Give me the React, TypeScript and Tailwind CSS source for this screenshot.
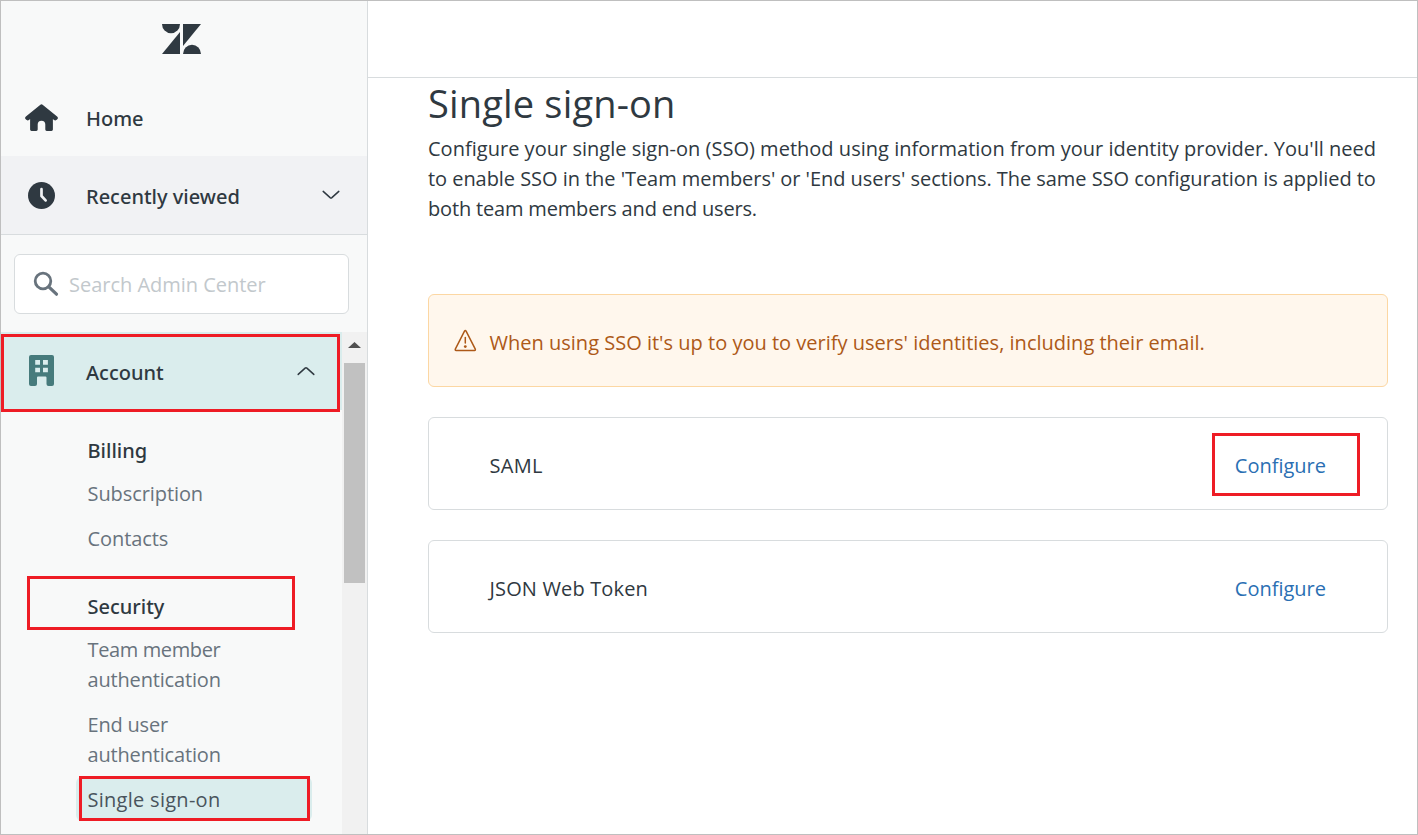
import React from "react";

const heading = "font-['Noto_Sans',sans-serif] font-medium text-[#2f3941]";

function Logo() {
  return (
    <svg width="39" height="30" viewBox="0 0 39 30" fill="#2f3941">
      <path d="M0 0H18A9 9.2 0 0 1 0 0Z" />
      <path d="M18 8V30H0Z" />
      <path d="M21 0H39L21 22Z" />
      <path d="M21 30A9 9.2 0 0 1 39 30Z" />
    </svg>
  );
}

function HomeIcon() {
  return (
    <svg width="34" height="28" viewBox="0 0 34 28" fill="#2f3941">
      <path d="M15.1 .9Q16.5 -.4 17.9 .9L32.1 12.6Q33.5 13.8 32.5 15L31.4 16Q30.2 16.8 29 15.9L27.9 15.1V25.6Q27.9 27 26.5 27H21.7Q20.3 27 20.3 25.6V20.6A3.8 3.8 0 0 0 12.7 20.6V25.6Q12.7 27 11.3 27H6.5Q5.1 27 5.1 25.6V15.1L4 15.9Q2.8 16.8 1.6 16L.5 15Q-.5 13.8 .9 12.6Z" />
    </svg>
  );
}

function ClockIcon() {
  return (
    <svg width="27" height="27" viewBox="0 0 27 27" fill="none">
      <circle cx="13.5" cy="13.5" r="13.5" fill="#2f3941" />
      <path d="M13.5 7.2V14L17.6 18.4" stroke="#f1f3f5" strokeWidth="2.7" strokeLinecap="round" strokeLinejoin="round" />
    </svg>
  );
}

function SearchIcon() {
  return (
    <svg width="26" height="26" viewBox="0 0 26 26" fill="none" stroke="#68737d">
      <circle cx="10" cy="10" r="7.8" strokeWidth="2.8" />
      <path d="M15.8 15.8L23.5 23.2" strokeWidth="3.2" strokeLinecap="round" />
    </svg>
  );
}

function BuildingIcon() {
  return (
    <svg width="25" height="31" viewBox="0 0 25 31" fill="#467b7c">
      <path
        fillRule="evenodd"
        d="M2 0H23Q25 0 25 2V29Q25 31 23 31H19.5Q17.5 31 17.5 29V22.5Q17.5 21.4 16.4 21.4H9Q8 21.4 8 22.5V29Q8 31 6 31H2Q0 31 0 29V2Q0 0 2 0ZM6.2 5V9.8H11V5ZM14 5V9.8H18.9V5ZM6.2 12.7V17.2H11V12.7ZM14 12.7V17.2H18.9V12.7Z"
      />
    </svg>
  );
}

function Chevron({ up = false }: { up?: boolean }) {
  return (
    <svg width="18" height="10" viewBox="0 0 18 10" fill="none" stroke="#2f3941" strokeWidth="1.5" strokeLinecap="round">
      <path d={up ? "M1.2 8.4L8.1 2.2Q9 1.5 9.9 2.2L16.8 8.4" : "M1.2 1.4L8.1 7.6Q9 8.3 9.9 7.6L16.8 1.4"} />
    </svg>
  );
}

function WarningIcon() {
  return (
    <svg width="24" height="24" viewBox="0 0 24 24" fill="none" stroke="#ad5918" strokeWidth="1.5" strokeLinecap="round" strokeLinejoin="round">
      <path d="M11.5 2.1Q12.3 .8 13.1 2.1L22.3 20.2Q22.7 21.4 21.5 21.5H3.1Q1.9 21.4 2.3 20.2Z" />
      <path d="M12.3 8.5V14" />
      <circle cx="12.3" cy="17.6" r="1.4" fill="#ad5918" stroke="none" />
    </svg>
  );
}

function Mark({ className }: { className: string }) {
  return <div className={`pointer-events-none absolute border-3 border-[#ee1c25] ${className}`} />;
}

function MethodCard({ name, spacing, marked = false }: { name: string; spacing: string; marked?: boolean }) {
  return (
    <div className="relative flex h-[93px] items-center justify-between rounded-md border border-[#d8dcde] pt-[4px] pr-[61px] pl-[60.5px] text-[#2f3941]">
      <span className={spacing}>{name}</span>
      <a className="text-[#2a6fb3]">Configure</a>
      {marked && <Mark className="top-[15px] right-[27px] h-[63px] w-[148px]" />}
    </div>
  );
}

export default function App() {
  return (
    <div className="flex h-[835px] w-[1418px] overflow-hidden border border-[#bfbfbf] bg-white font-['Open_Sans',sans-serif] text-[20px] leading-[30px]">
      <aside className="flex w-[367px] shrink-0 flex-col border-r border-[#d8dcde] bg-[#f8f9f9]">
        <div className="flex h-[77px] justify-center pt-[23px] pr-[5px]">
          <Logo />
        </div>
        <div className="flex h-[78px] items-center pt-[2px] pl-[24px]">
          <div className="flex w-[61px]">
            <HomeIcon />
          </div>
          <span className={`pt-px ${heading}`}>Home</span>
        </div>
        <div className="flex h-[79px] items-center border-b border-[#d8dcde] bg-[#f1f2f4] pr-[27px] pl-[27px]">
          <div className="flex w-[58px]">
            <ClockIcon />
          </div>
          <span className={`flex-1 pt-[3px] ${heading}`}>Recently viewed</span>
          <Chevron />
        </div>
        <div className="h-[97px] pt-[19px] pl-[13px]">
          <div className="flex h-[60px] w-[335px] items-center rounded-md border border-[#d8dcde] bg-white pl-[18px]">
            <SearchIcon />
            <span className="ml-[10px] pt-[2px] tracking-[-0.02px] text-[#c2c8cc]">Search Admin Center</span>
          </div>
        </div>
        <div className="flex min-h-0 flex-1">
          <nav className="w-[341px]">
            <div className="relative flex h-[78px] items-center bg-[#daeded] pr-[27px] pl-[28px]">
              <div className="flex w-[57px] pb-[2px]">
                <BuildingIcon />
              </div>
              <span className={`flex-1 pt-[3px] ${heading}`}>Account</span>
              <Chevron up />
              <Mark className="top-[2px] left-0 h-[78px] w-[339px]" />
            </div>
            <div className="flex flex-col pt-[26px] pl-[86.5px] text-[#68737d]">
              <span className={heading}>Billing</span>
              <span className="mt-[13px] tracking-[-0.08px]">Subscription</span>
              <span className="mt-[15px] tracking-[-0.08px]">Contacts</span>
              <div className="relative mt-[38px]">
                <span className={heading}>Security</span>
                <Mark className="-top-[16px] -left-[60.5px] h-[54px] w-[268px]" />
              </div>
              <div className="mt-[13px]">
                <div className="tracking-[-0.38px]">Team member</div>
                <div className="tracking-[-0.17px]">authentication</div>
              </div>
              <div className="mt-[15px]">
                <div className="tracking-[-0.2px]">End user</div>
                <div className="tracking-[-0.17px]">authentication</div>
              </div>
              <div className="relative mt-[7px] -ml-[11.5px] flex h-[44px] w-[236px] items-center rounded-md bg-[#daeded] pt-px pl-[11.5px] tracking-[0.28px] text-[#49545c]">
                Single sign-on
                <Mark className="-top-px left-[3px] h-[45px] w-[231px]" />
              </div>
            </div>
          </nav>
          <div className="flex flex-1 flex-col bg-[#f1f1f1]">
            <svg className="mt-[10px] ml-[6px]" width="13" height="6" viewBox="0 0 13 6" fill="#505050">
              <path d="M6.5 0L13 6H0Z" />
            </svg>
            <div className="mt-[15px] ml-[2px] h-[220px] w-[21px] bg-[#c1c1c1]" />
          </div>
        </div>
      </aside>
      <main className="flex-1">
        <header className="h-[77px] border-b border-[#d8dcde]" />
        <div className="pr-[29px] pl-[60px] text-[#2f3941]">
          <h1 className="pt-[2px] text-[38px] leading-[46px] tracking-[0.17px]">Single sign-on</h1>
          <div className="pt-[8px] whitespace-nowrap">
            <div className="tracking-[0.02px]">Configure your single sign-on (SSO) method using information from your identity provider. You'll need</div>
            <div className="tracking-[-0.05px]">to enable SSO in the 'Team members' or 'End users' sections. The same SSO configuration is applied to</div>
            <div className="tracking-[-0.17px]">both team members and end users.</div>
          </div>
          <div className="mt-[70px] flex flex-col gap-[30px]">
            <div className="flex h-[93px] items-center rounded-md border border-[#fcd7a3] bg-[#fff7ed] pl-[24px] text-[#ad5918]">
              <WarningIcon />
              <span className="ml-[12.5px] pt-[4px] tracking-[0.01px]">When using SSO it's up to you to verify users' identities, including their email.</span>
            </div>
            <MethodCard name="SAML" spacing="tracking-[0.3px]" marked />
            <MethodCard name="JSON Web Token" spacing="tracking-[0.15px]" />
          </div>
        </div>
      </main>
    </div>
  );
}
